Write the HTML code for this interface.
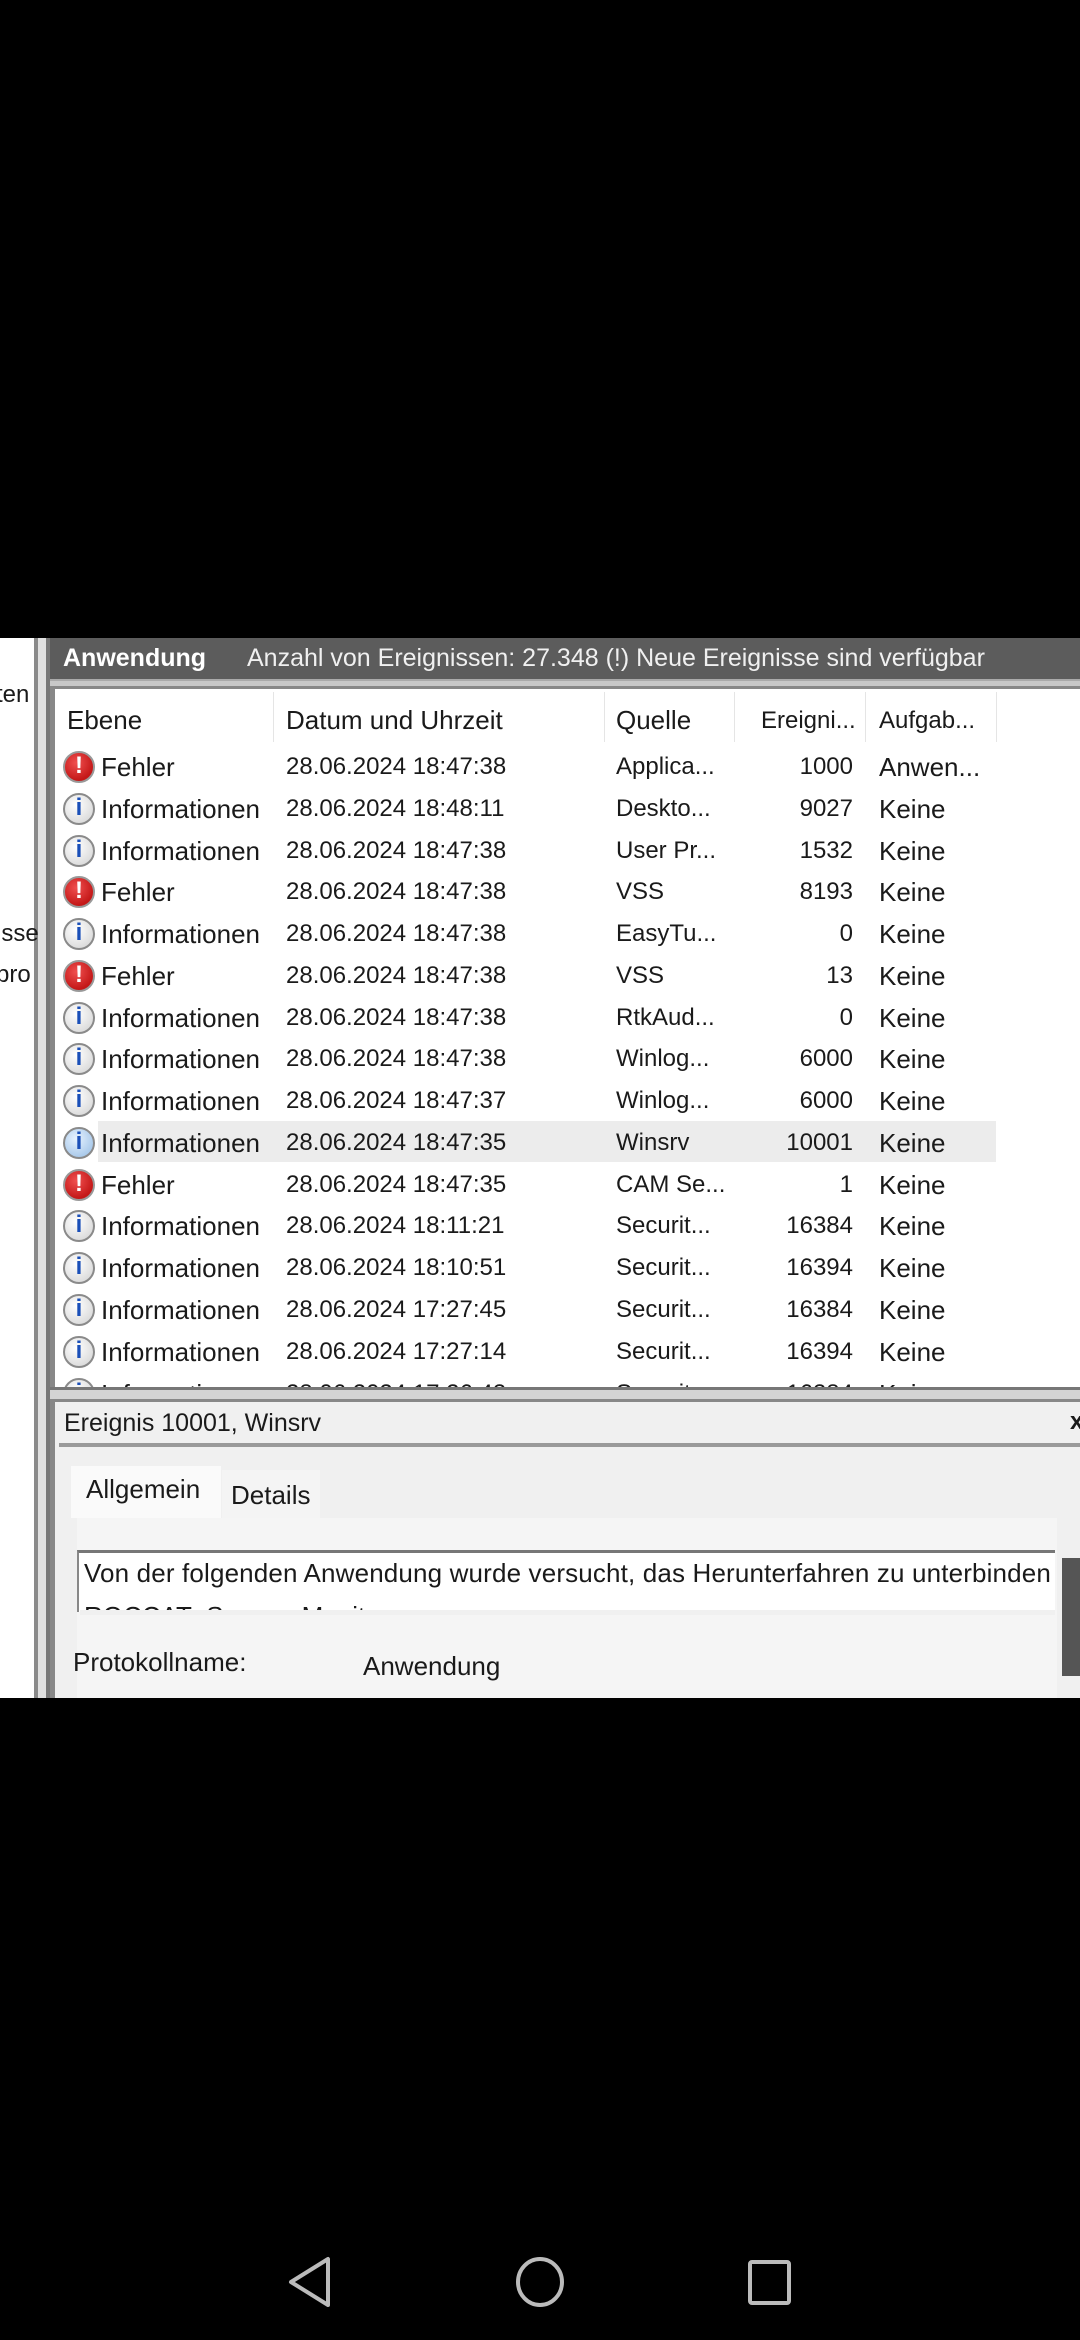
<!DOCTYPE html>
<html><head><meta charset="utf-8"><style>
*{margin:0;padding:0;box-sizing:border-box}
body{width:1080px;height:2340px;background:#000;position:relative;overflow:hidden;font-family:"Liberation Sans",sans-serif;color:#1a1a1a}
.a{position:absolute;white-space:nowrap}
.t{font-size:24px;line-height:28px}
.b{font-size:26px;line-height:28px}
.ic{position:absolute;width:32px;height:32px;border-radius:50%}
.err{background:radial-gradient(circle at 40% 35%,#f05050,#c41818 70%);border:2px solid #999}
.inf{background:radial-gradient(circle at 40% 35%,#fff,#dcdcdc 75%);border:2px solid #8a8a8a}
.err::after{content:"!";position:absolute;left:0;right:0;top:-1px;text-align:center;color:#fff;font:bold 24px "Liberation Sans",sans-serif}
.inf::after{content:"i";position:absolute;left:0;right:0;top:-1px;text-align:center;color:#1a4fb8;font:bold 24px "Liberation Sans",sans-serif}
.r{text-align:right;width:90px}
</style></head><body>
<div class="a" style="left:0;top:638px;width:1080px;height:1060px;background:#fff"></div>
<div class="a" style="left:34px;top:638px;width:4px;height:1060px;background:#8a8a8a"></div>
<div class="a" style="left:38px;top:638px;width:8px;height:1060px;background:#e0e0e0"></div>
<div class="a" style="left:46px;top:638px;width:4px;height:1060px;background:#777"></div>
<div class="a t" style="left:-4px;top:681px">ten</div>
<div class="a t" style="left:-4px;top:920px">isse</div>
<div class="a t" style="left:-4px;top:961px">pro</div>
<div class="a" style="left:50px;top:638px;width:1030px;height:41px;background:#5c5c5c"></div>
<div class="a" style="left:63px;top:644px;font-size:25px;font-weight:bold;color:#fff">Anwendung</div>
<div class="a" style="left:247px;top:644px;font-size:25px;color:#f0f0f0">Anzahl von Ereignissen: 27.348 (!) Neue Ereignisse sind verfügbar</div>
<div class="a" style="left:50px;top:679px;width:1030px;height:10px;background:#c8c8c8;border-top:2px solid #aaa;border-bottom:3px solid #888"></div>
<div class="a" style="left:50px;top:689px;width:5px;height:700px;background:#888"></div>
<div class="a" style="left:273px;top:692px;width:1px;height:50px;background:#e5e5e5"></div>
<div class="a" style="left:604px;top:692px;width:1px;height:50px;background:#e5e5e5"></div>
<div class="a" style="left:734px;top:692px;width:1px;height:50px;background:#e5e5e5"></div>
<div class="a" style="left:865px;top:692px;width:1px;height:50px;background:#e5e5e5"></div>
<div class="a" style="left:996px;top:692px;width:1px;height:50px;background:#e5e5e5"></div>
<div class="a b" style="left:67px;top:706px">Ebene</div>
<div class="a b" style="left:286px;top:706px">Datum und Uhrzeit</div>
<div class="a b" style="left:616px;top:706px">Quelle</div>
<div class="a t" style="left:761px;top:707px">Ereigni...</div>
<div class="a t" style="left:879px;top:707px">Aufgab...</div>
<div class="a" style="left:98px;top:1121px;width:898px;height:41px;background:#ececec"></div>
<div id="rows"></div>
<script>
var d=[["e","Fehler","28.06.2024 18:47:38","Applica...","1000","Anwen..."],
["i","Informationen","28.06.2024 18:48:11","Deskto...","9027","Keine"],
["i","Informationen","28.06.2024 18:47:38","User Pr...","1532","Keine"],
["e","Fehler","28.06.2024 18:47:38","VSS","8193","Keine"],
["i","Informationen","28.06.2024 18:47:38","EasyTu...","0","Keine"],
["e","Fehler","28.06.2024 18:47:38","VSS","13","Keine"],
["i","Informationen","28.06.2024 18:47:38","RtkAud...","0","Keine"],
["i","Informationen","28.06.2024 18:47:38","Winlog...","6000","Keine"],
["i","Informationen","28.06.2024 18:47:37","Winlog...","6000","Keine"],
["i","Informationen","28.06.2024 18:47:35","Winsrv","10001","Keine"],
["e","Fehler","28.06.2024 18:47:35","CAM Se...","1","Keine"],
["i","Informationen","28.06.2024 18:11:21","Securit...","16384","Keine"],
["i","Informationen","28.06.2024 18:10:51","Securit...","16394","Keine"],
["i","Informationen","28.06.2024 17:27:45","Securit...","16384","Keine"],
["i","Informationen","28.06.2024 17:27:14","Securit...","16394","Keine"],
["i","Informationen","28.06.2024 17:26:43","Securit...","16384","Keine"]];
var h="";
for(var i=0;i<d.length;i++){var c=767+i*41.77,t=c-14,r=d[i];
h+='<div class="ic '+(r[0]=="e"?"err":"inf")+'" style="left:63px;top:'+(c-16)+'px'+(i==9?';background:radial-gradient(circle at 40% 35%,#e6f2ff,#a9c9ea 75%)':'')+'"></div>';
h+='<div class="a b" style="left:101px;top:'+t+'px">'+r[1]+'</div>';
h+='<div class="a t" style="left:286px;top:'+t+'px">'+r[2]+'</div>';
h+='<div class="a t" style="left:616px;top:'+t+'px">'+r[3]+'</div>';
h+='<div class="a t r" style="left:763px;top:'+t+'px">'+r[4]+'</div>';
h+='<div class="a b" style="left:879px;top:'+t+'px">'+r[5]+'</div>';}
document.getElementById("rows").innerHTML=h;
</script>
<div class="a" style="left:50px;top:1387px;width:1030px;height:15px;background:#d4d4d4;border-top:3px solid #777;border-bottom:3px solid #888"></div>
<div class="a" style="left:50px;top:1402px;width:1030px;height:296px;background:#f0f0f0"></div>
<div class="a" style="left:50px;top:1402px;width:5px;height:296px;background:#888"></div>
<div class="a" style="left:64px;top:1409px;font-size:25px;line-height:28px">Ereignis 10001, Winsrv</div>
<div class="a" style="left:1070px;top:1408px;font-size:24px;font-weight:bold">x</div>
<div class="a" style="left:59px;top:1443px;width:1021px;height:4px;background:#9a9a9a"></div>
<div class="a" style="left:71px;top:1466px;width:150px;height:52px;background:#fafafa"></div>
<div class="a b" style="left:86px;top:1475px">Allgemein</div>
<div class="a" style="left:222px;top:1470px;width:98px;height:48px;background:#f4f4f4"></div>
<div class="a b" style="left:231px;top:1481px">Details</div>
<div class="a" style="left:77px;top:1518px;width:980px;height:180px;background:#f5f5f5"></div>
<div class="a" style="left:77px;top:1550px;width:978px;height:62px;background:#fff;border-top:3px solid #777;border-left:2px solid #888;overflow:hidden"></div>
<div class="a" style="left:84px;top:1559px;font-size:26px;line-height:28px;letter-spacing:0.15px">Von der folgenden Anwendung wurde versucht, das Herunterfahren zu unterbinden</div>
<div class="a" style="left:80px;top:1604px;width:975px;height:8px;overflow:hidden"><div class="b" style="position:absolute;left:4px;top:-2px">ROCCAT_Swarm_Monitor.exe</div></div>
<div class="a" style="left:80px;top:1610px;width:975px;height:5px;background:#f0f0f0"></div>
<div class="a" style="left:1062px;top:1558px;width:18px;height:118px;background:#555"></div>
<div class="a b" style="left:73px;top:1648px">Protokollname:</div>
<div class="a b" style="left:363px;top:1652px">Anwendung</div>
<svg class="a" style="left:0;top:2230px" width="1080" height="100">
<path d="M328 29 L328 75 L291 52 Z" fill="none" stroke="#bbb" stroke-width="4" stroke-linejoin="round"/>
<ellipse cx="540" cy="52" rx="22" ry="23" fill="none" stroke="#bbb" stroke-width="4"/>
<rect x="750" y="32" width="39" height="41" rx="2" fill="none" stroke="#bbb" stroke-width="4"/>
</svg>
</body></html>
